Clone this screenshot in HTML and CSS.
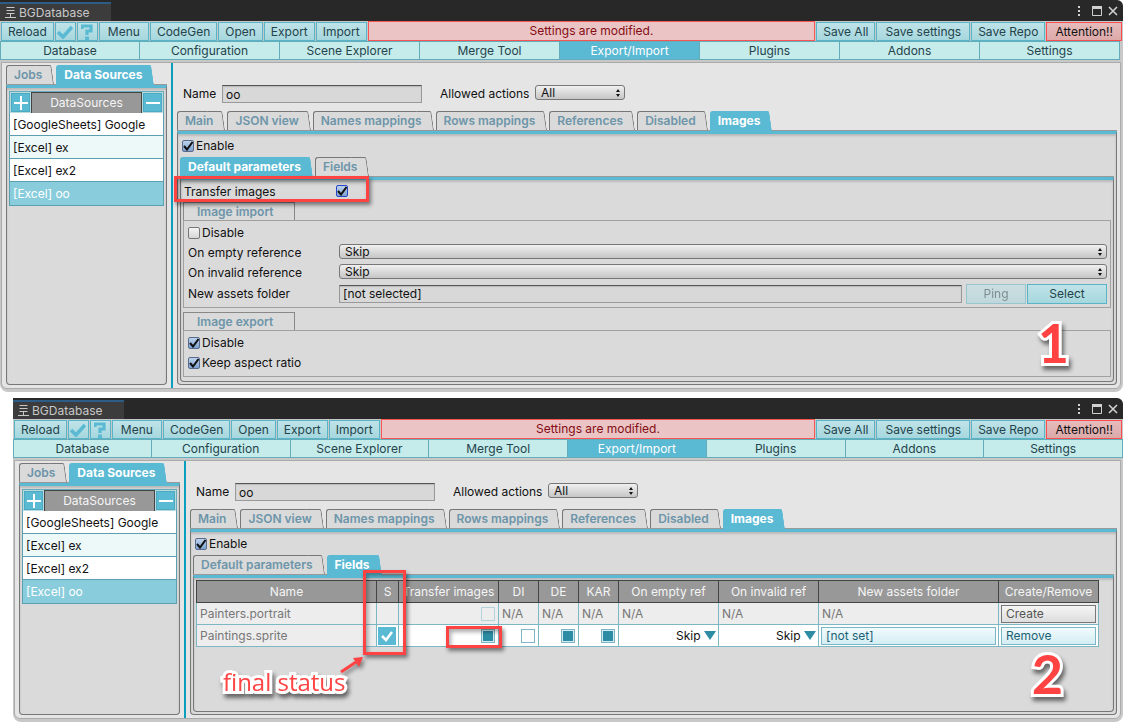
FILE: index.html
```
<!DOCTYPE html>
<html lang="en">
<head>
<meta charset="utf-8">
<title>BGDatabase</title>
<link rel="stylesheet" href="styles.css">
</head>
<body>
<svg class="defs" width="0" height="0" aria-hidden="true">
  <symbol id="logo" viewBox="0 0 12 12"><path d="M1.500 .5h8M1.500 3.500h8M1.500 6.500h8M0 10.500h11M5.500 7v3" stroke="#c8c8c8" fill="none"/></symbol>
  <symbol id="dots" viewBox="0 0 4 12"><path d="M1 1h2v2h-2zM1 5h2v2h-2zM1 9h2v2h-2z" fill="#d0d0d0"/></symbol>
  <symbol id="max" viewBox="0 0 10 10"><path d="M.5 1h9v8.500h-9z" fill="none" stroke="#d0d0d0"/><path d="M0 0h10v3H0z" fill="#d0d0d0"/></symbol>
  <symbol id="close" viewBox="0 0 10 10"><path d="M1 1l8 8M9 1L1 9" stroke="#d0d0d0" stroke-width="1.600"/></symbol>
  <symbol id="tick" viewBox="0 0 16 14"><path d="M1 7l5 5L15 2" fill="none" stroke="#5ab9d3" stroke-width="3.600"/></symbol>
  <symbol id="help" viewBox="0 0 12 16"><path d="M1 5V2h9v5H6v4" fill="none" stroke="#5ab9d3" stroke-width="3.200"/><path d="M4 12.500h4V16H4z" fill="#5ab9d3"/></symbol>
  <symbol id="updown" viewBox="0 0 4 8"><path d="M2 0l2 3H0zM2 8l2-3H0z" fill="#111"/></symbol>
  <symbol id="down" viewBox="0 0 12 9"><path d="M0 0h12L6 9z" fill="#2c8ca3"/></symbol>
</svg>

<section class="window">
  <header class="titlebar">
    <div class="title"><svg width="12" height="12"><use href="#logo"/></svg><span>BGDatabase</span></div>
    <div class="controls"><svg width="4" height="12"><use href="#dots"/></svg><svg width="10" height="10"><use href="#max"/></svg><svg width="10" height="10"><use href="#close"/></svg></div>
  </header>
  <div class="toolbar">
    <button class="tool">Reload</button><button class="tool icon" aria-label="Confirm"><svg width="16" height="14"><use href="#tick"/></svg></button><button class="tool icon" aria-label="Help"><svg width="12" height="16"><use href="#help"/></svg></button><button class="tool wide">Menu</button><button class="tool">CodeGen</button><button class="tool">Open</button><button class="tool">Export</button><button class="tool">Import</button>
    <div class="message">Settings are modified.</div>
    <button class="tool">Save All</button><button class="tool wide">Save settings</button><button class="tool">Save Repo</button><button class="tool wide alert">Attention!!</button>
  </div>
  <nav class="sections">
    <button>Database</button><button>Configuration</button><button>Scene Explorer</button><button>Merge Tool</button><button class="active">Export/Import</button><button>Plugins</button><button>Addons</button><button>Settings</button>
  </nav>
  <div class="workspace">
    <aside class="sidebar">
      <div class="tabs"><button class="tab">Jobs</button><button class="tab active">Data Sources</button></div>
      <div class="panel list-panel">
        <div class="list-head"><button class="square" aria-label="Add"><svg width="14" height="14"><path d="M7 0v14M0 7h14" stroke="#fff" stroke-width="2"/></svg></button><span>DataSources</span><button class="square" aria-label="Remove"><svg width="14" height="14"><path d="M0 7h14" stroke="#fff" stroke-width="2"/></svg></button></div>
        <ul class="list"><li>[GoogleSheets] Google</li><li class="alt">[Excel] ex</li><li>[Excel] ex2</li><li class="selected">[Excel] oo</li></ul>
      </div>
    </aside>
    <main class="main">
      <div class="name-row">
        <label for="name1">Name</label><input class="field name" id="name1" type="text" value="oo">
        <label for="actions1" class="second">Allowed actions</label><span class="popup small"><select id="actions1"><option>All</option></select><svg width="4" height="8"><use href="#updown"/></svg></span>
      </div>
      <div class="tabs"><button class="tab">Main</button><button class="tab">JSON view</button><button class="tab">Names mappings</button><button class="tab">Rows mappings</button><button class="tab">References</button><button class="tab">Disabled</button><button class="tab active">Images</button></div>
      <div class="panel outer">
        <label class="check"><input type="checkbox" checked>Enable</label>
        <div class="tabs inner-tabs"><button class="tab active">Default parameters</button><button class="tab">Fields</button></div>
        <div class="panel inner">
          <div class="transfer"><label for="transfer">Transfer images</label><input id="transfer" class="focused" type="checkbox" checked></div>
          <h2 class="group-title">Image import</h2>
          <div class="group">
            <label class="check"><input type="checkbox">Disable</label>
            <div class="row"><label for="empty">On empty reference</label><span class="popup"><select id="empty"><option>Skip</option></select><svg width="4" height="8"><use href="#updown"/></svg></span></div>
            <div class="row"><label for="invalid">On invalid reference</label><span class="popup"><select id="invalid"><option>Skip</option></select><svg width="4" height="8"><use href="#updown"/></svg></span></div>
            <div class="row folder"><label for="folder">New assets folder</label><input class="field" id="folder" type="text" value="[not selected]"><button class="tool ping" disabled>Ping</button><button class="tool pick">Select</button></div>
          </div>
          <h2 class="group-title later">Image export</h2>
          <div class="group">
            <label class="check"><input type="checkbox" checked>Disable</label>
            <label class="check"><input type="checkbox" checked>Keep aspect ratio</label>
          </div>
        </div>
      </div>
    </main>
  </div>
  <div class="mark transfer-mark"></div>
  <div class="number one">1</div>
</section>

<section class="window second-window">
  <header class="titlebar">
    <div class="title"><svg width="12" height="12"><use href="#logo"/></svg><span>BGDatabase</span></div>
    <div class="controls"><svg width="4" height="12"><use href="#dots"/></svg><svg width="10" height="10"><use href="#max"/></svg><svg width="10" height="10"><use href="#close"/></svg></div>
  </header>
  <div class="toolbar">
    <button class="tool">Reload</button><button class="tool icon" aria-label="Confirm"><svg width="16" height="14"><use href="#tick"/></svg></button><button class="tool icon" aria-label="Help"><svg width="12" height="16"><use href="#help"/></svg></button><button class="tool wide">Menu</button><button class="tool">CodeGen</button><button class="tool">Open</button><button class="tool">Export</button><button class="tool">Import</button>
    <div class="message">Settings are modified.</div>
    <button class="tool">Save All</button><button class="tool wide">Save settings</button><button class="tool">Save Repo</button><button class="tool wide alert">Attention!!</button>
  </div>
  <nav class="sections">
    <button>Database</button><button>Configuration</button><button>Scene Explorer</button><button>Merge Tool</button><button class="active">Export/Import</button><button>Plugins</button><button>Addons</button><button>Settings</button>
  </nav>
  <div class="workspace">
    <aside class="sidebar">
      <div class="tabs"><button class="tab">Jobs</button><button class="tab active">Data Sources</button></div>
      <div class="panel list-panel">
        <div class="list-head"><button class="square" aria-label="Add"><svg width="14" height="14"><path d="M7 0v14M0 7h14" stroke="#fff" stroke-width="2"/></svg></button><span>DataSources</span><button class="square" aria-label="Remove"><svg width="14" height="14"><path d="M0 7h14" stroke="#fff" stroke-width="2"/></svg></button></div>
        <ul class="list"><li>[GoogleSheets] Google</li><li class="alt">[Excel] ex</li><li>[Excel] ex2</li><li class="selected">[Excel] oo</li></ul>
      </div>
    </aside>
    <main class="main">
      <div class="name-row">
        <label for="name2">Name</label><input class="field name" id="name2" type="text" value="oo">
        <label for="actions2" class="second">Allowed actions</label><span class="popup small"><select id="actions2"><option>All</option></select><svg width="4" height="8"><use href="#updown"/></svg></span>
      </div>
      <div class="tabs"><button class="tab">Main</button><button class="tab">JSON view</button><button class="tab">Names mappings</button><button class="tab">Rows mappings</button><button class="tab">References</button><button class="tab">Disabled</button><button class="tab active">Images</button></div>
      <div class="panel outer">
        <label class="check"><input type="checkbox" checked>Enable</label>
        <div class="tabs inner-tabs"><button class="tab">Default parameters</button><button class="tab active">Fields</button></div>
        <div class="panel inner table-panel">
          <table class="fields">
            <colgroup><col class="c-name"><col class="c-s"><col class="c-mid"><col class="c-flag"><col class="c-flag"><col class="c-flag"><col class="c-mid"><col class="c-mid"><col class="c-name"><col class="c-mid"></colgroup>
            <thead><tr><th>Name</th><th>S</th><th>Transfer images</th><th>DI</th><th>DE</th><th>KAR</th><th>On empty ref</th><th>On invalid ref</th><th>New assets folder</th><th>Create/Remove</th></tr></thead>
            <tbody>
              <tr class="off"><td>Painters.portrait</td><td></td><td class="end"><input type="checkbox" class="box" aria-label="Transfer images" disabled></td><td>N/A</td><td>N/A</td><td>N/A</td><td>N/A</td><td>N/A</td><td>N/A</td><td class="fill"><button class="cell create">Create</button></td></tr>
              <tr><td class="label-cell">Paintings.sprite</td><td class="status"><input type="checkbox" class="final" aria-label="Final status" checked></td><td class="end"><input type="checkbox" class="box" aria-label="Transfer images" checked></td><td class="end"><input type="checkbox" class="box" aria-label="DI"></td><td class="end"><input type="checkbox" class="box" aria-label="DE" checked></td><td class="end"><input type="checkbox" class="box" aria-label="KAR" checked></td><td class="pick-cell"><span><select aria-label="On empty ref"><option>Skip</option></select><svg width="12" height="9"><use href="#down"/></svg></span></td><td class="pick-cell"><span><select aria-label="On invalid ref"><option>Skip</option></select><svg width="12" height="9"><use href="#down"/></svg></span></td><td class="fill"><button class="cell">[not set]</button></td><td class="fill"><button class="cell">Remove</button></td></tr>
            </tbody>
          </table>
        </div>
      </div>
    </main>
  </div>
  <div class="mark status-mark"></div>
  <div class="mark box-mark"></div>
  <svg class="arrow" width="26" height="20"><path d="M2 16L17 6" stroke="#ff4343" stroke-width="3"/><path d="M24 1L14 2l6 9z" fill="#ff4343"/></svg>
  <div class="note">final status</div>
  <div class="number two">2</div>
</section>
</body>
</html>
```
FILE: styles.css
```
* { box-sizing: border-box; }
body {
  margin: 0;
  min-height: 100vh;
  display: flex;
  flex-direction: column;
  gap: 6px;
  background: #fff;
  font: 12px/16px Inter, sans-serif;
  color: #111;
}
button, input, select { font: inherit; color: inherit; margin: 0; }
.defs { position: absolute; }
svg { display: block; flex: none; }

.window {
  position: relative;
  display: flex;
  flex-direction: column;
  background: #c8c8c8;
  border-radius: 0 8px 8px 8px;
}
.second-window { margin-left: 13px; flex: 1; }

.titlebar {
  height: 21px;
  display: flex;
  justify-content: space-between;
  background: #282828;
  border-top-right-radius: 6px;
}
.title {
  display: flex;
  align-items: center;
  gap: 2px;
  width: 111px;
  margin-top: 2px;
  padding-left: 5px;
  background: #3c3c3c;
  border-top: 2px solid #2c5d87;
  color: #c8c8c8;
}
.controls { display: flex; align-items: center; gap: 6px; padding-right: 5px; }
.controls svg:first-child { margin-right: 5px; }

.toolbar { display: flex; gap: 1px; height: 20px; padding: 1px 1px 0; }
.tool {
  padding: 0 6px;
  border: 1px solid #58b4c6;
  background: linear-gradient(#bfe3e8, #a6d7de);
  color: #24434a;
  white-space: nowrap;
}
.tool.wide { padding: 0 8px; }
.tool.icon { display: flex; align-items: center; justify-content: center; width: 21px; padding: 0; }
.tool.alert { border-color: #fa4d4d; background: linear-gradient(#e6bcbc, #dda9a9); color: #111; }
.message {
  flex: 1;
  margin-top: -1px;
  border: 1px solid #fa5555;
  background: #ebc5c5;
  color: #850c14;
  text-align: center;
  line-height: 18px;
}

.sections { display: grid; grid-template-columns: repeat(8, 1fr); height: 19px; }
.window:first-of-type .sections { margin-right: 3px; }
.sections button {
  padding: 0;
  border: 1px solid #65acbb;
  border-width: 1px 1px 1px 0;
  background: #c5ebeb;
  color: #24434a;
}
.sections button:first-child { border-left-width: 1px; }
.sections .active { background: #5ab9d3; color: #fff; }

.workspace {
  flex: 1;
  display: flex;
  margin: 2px 2px 3px 1px;
  border: 1px solid #aaa;
  border-radius: 0 0 6px 6px;
  background: #e5e5e5;
}
.sidebar {
  display: flex;
  flex-direction: column;
  width: 171px;
  padding: 2px 4px 3px;
  border-right: 2px solid #0c9fbd;
}
.main { flex: 1; min-width: 0; display: flex; flex-direction: column; padding: 0 3px 3px 4px; }

.tabs { display: flex; gap: 2px; border-bottom: 1px solid #999; }
.tab {
  position: relative;
  isolation: isolate;
  height: 19px;
  padding: 0 12px 0 8px;
  border: 0;
  background: none;
  color: #6d95a9;
  font-weight: 600;
  white-space: nowrap;
}
.tab::before, .tab::after {
  content: "";
  position: absolute;
  z-index: -1;
  top: 0;
  bottom: 0;
  border: 1px solid #777;
  background: #dadada;
}
.tab::before { left: 0; right: 8px; border-width: 1px 0 0 1px; border-top-left-radius: 3px; }
.tab::after { right: 0; width: 14px; border-width: 1px 1px 0 0; border-top-right-radius: 2px; transform: skewX(8deg); transform-origin: bottom; }
.tab.active { color: #fff; font-weight: 700; }
.tab.active::before, .tab.active::after { background: #5ab9d3; border-color: #5ab9d3; bottom: -1px; }

.panel {
  flex: 1;
  border: 1px solid #777;
  border-top: 3px solid #5ab9d3;
  border-radius: 0 0 4px 4px;
  background: #dadada;
  box-shadow: inset 0 2px 2px #bbb;
}
.list-panel { padding: 3px 2px; }
.list-head {
  display: flex;
  height: 22px;
  padding: 1px;
  border: 1px solid #65acbb;
  border-bottom: 0;
  background: #b9dbe0;
}
.list-head span { flex: 1; margin: -1px 1px; border: 1px solid #444; border-bottom: 0; background: #989898; color: #f5f5f5; text-align: center; line-height: 20px; }
.square { display: grid; place-items: center; width: 19px; padding: 0; border: 1px solid #4ca9c2; background: #5ab9d3; }
.list { margin: 0; padding: 0; list-style: none; border: 1px solid #5b9fb0; border-top: 0; background: #fff; }
.list li { height: 23px; padding: 3px 3px 0; border-bottom: 1px solid #5b9fb0; line-height: 18px; white-space: nowrap; }
.list li:last-child { border-bottom: 0; }
.list .alt { background: #edf9f9; }
.list .selected { background: #89cddc; color: #fff; }

.name-row { display: flex; align-items: center; padding: 22px 0 8px 6px; }
.name-row label:first-child { width: 39px; }
.name-row .second { width: 95px; margin-left: 18px; white-space: nowrap; }
.field {
  height: 18px;
  padding: 0 3px;
  border: 1px solid #999;
  border-top-color: #555;
  border-radius: 0;
  background: #d8d8d8;
  box-shadow: inset 0 1px 1px #bbb;
}
.name { width: 200px; }
.popup { position: relative; display: flex; flex: 1; }
.popup.small { flex: none; width: 90px; margin-bottom: 3px; }
.popup select {
  appearance: none;
  width: 100%;
  height: 15px;
  padding: 0 5px;
  border: 1px solid #777;
  border-radius: 3px;
  background: linear-gradient(#f0f0f0, #c6c6c6);
  line-height: 13px;
}
.popup svg { position: absolute; right: 5px; top: 4px; }

.outer { display: flex; flex-direction: column; padding: 4px 2px 2px; }
.check { display: flex; align-items: center; gap: 2px; height: 20px; }
.outer > .check { height: 16px; padding-left: 2px; }
.check input, .transfer input {
  appearance: none;
  width: 12px;
  height: 12px;
  border: 1px solid #777;
  border-radius: 2px;
  background: linear-gradient(#f4f4f4, #d6d6d6);
}
.check input:checked, .transfer input:checked {
  border-color: #596b8c;
  background: url("data:image/svg+xml,%3Csvg xmlns='http://www.w3.org/2000/svg' viewBox='0 0 10 10'%3E%3Cpath d='M1 5l3 3.500L9.500 1' fill='none' stroke='%23111' stroke-width='2'/%3E%3C/svg%3E"), linear-gradient(#bdd2ec, #7da2d0);
}
.transfer input.focused { border-color: #2546c7; }
.inner-tabs { margin-top: 3px; }
.inner { padding: 2px 2px 4px; }
.transfer { display: flex; align-items: center; height: 19px; margin-bottom: 1px; padding-left: 1px; }
.transfer label { width: 152px; }
.transfer input { margin-bottom: 2px; }
.group-title {
  width: 112px;
  height: 18px;
  margin: 0;
  padding-left: 13px;
  border: 1px solid #888;
  border-bottom: 0;
  color: #6d95a9;
  font-size: 12px;
  font-weight: 600;
  line-height: 18px;
}
.group-title.later { margin-top: 4px; }
.group { padding: 2px 3px 3px 4px; border: 1px solid #a0a0a0; }
.row { display: flex; height: 20px; align-items: center; }
.row label { width: 151px; }
.row .popup { margin-bottom: 3px; }
.folder { gap: 1px; height: 21px; }
.folder label { width: 150px; }
.folder .field { flex: 1; min-width: 0; margin-right: 3px; }
.folder .tool { height: 20px; }
.ping { width: 60px; }
.pick { width: 80px; }
.ping:disabled { opacity: .5; }

.table-panel { padding: 2px; }
.fields { width: 902px; table-layout: fixed; border-collapse: collapse; background: #fff; }
.c-name { width: 180px; }
.c-s { width: 22px; }
.c-mid { width: 100px; }
.c-flag { width: 40px; }
.fields th { height: 22px; padding: 0; border: 1px solid #444; background: #989898; color: #f5f5f5; font-weight: 400; white-space: nowrap; }
.fields td { height: 22px; padding: 0 3px; border: 1px solid #7cb7c4; white-space: nowrap; }
.off, .label-cell { background: #ededed; color: #777; }
.fields .end { padding: 0 3px; text-align: right; }
.fields input { appearance: none; display: inline-block; vertical-align: middle; }
.box { width: 14px; height: 14px; border: 1px solid #7cb7c4; background: #fff; }
.box:checked { background: #2c8ca3; box-shadow: inset 0 0 0 1px #d5eaf0; }
.box:disabled { border-color: #b3d3db; background: #ededed; }
.fields .status { padding: 0 1px; }
.final {
  width: 18px;
  height: 18px;
  background: #5ab9d3 url("data:image/svg+xml,%3Csvg xmlns='http://www.w3.org/2000/svg' viewBox='0 0 18 18'%3E%3Cpath d='M4 9l4 4 6-8' fill='none' stroke='white' stroke-width='2.500'/%3E%3C/svg%3E");
}
.pick-cell span { display: flex; align-items: center; justify-content: flex-end; gap: 3px; }
.pick-cell select { appearance: none; border: 0; padding: 0; background: none; }
.fields .pick-cell { padding-right: 2px; }
.fields .fill { padding: 1px 2px; }
.cell {
  display: block;
  width: 100%;
  height: 18px;
  padding: 0 4px;
  border: 1px solid #7cb7c4;
  background: linear-gradient(#f2fbfd, #d3edf3);
  color: #1b6175;
  text-align: left;
}
.create { border-color: #777; background: linear-gradient(#f5f5f5, #ddd); color: #555; }

.mark { position: absolute; border: 3px solid #ff4343; box-shadow: 2px 3px 4px #0007, inset 2px 3px 4px #0005; }
.transfer-mark { left: 174px; top: 176px; width: 195px; height: 26px; }
.status-mark { left: 350px; top: 172px; width: 43px; height: 85px; }
.box-mark { left: 433px; top: 228px; width: 56px; height: 22px; }
.arrow { position: absolute; left: 326px; top: 258px; filter: drop-shadow(2px 3px 2px #0007); }
.note, .number {
  position: absolute;
  color: #ff4343;
  font-family: "Open Sans", sans-serif;
  font-weight: 400;
  paint-order: stroke fill;
  -webkit-text-stroke: 6px #fff;
  filter: drop-shadow(2px 4px 2px #0008);
}
.note { left: 210px; top: 270px; font-size: 24px; line-height: 28px; white-space: nowrap; }
.number { font-family: Lato, sans-serif; font-weight: 700; font-size: 54px; line-height: 44px; }
.one { right: 54px; top: 321px; }
.two { right: 60px; bottom: 26px; }
```
